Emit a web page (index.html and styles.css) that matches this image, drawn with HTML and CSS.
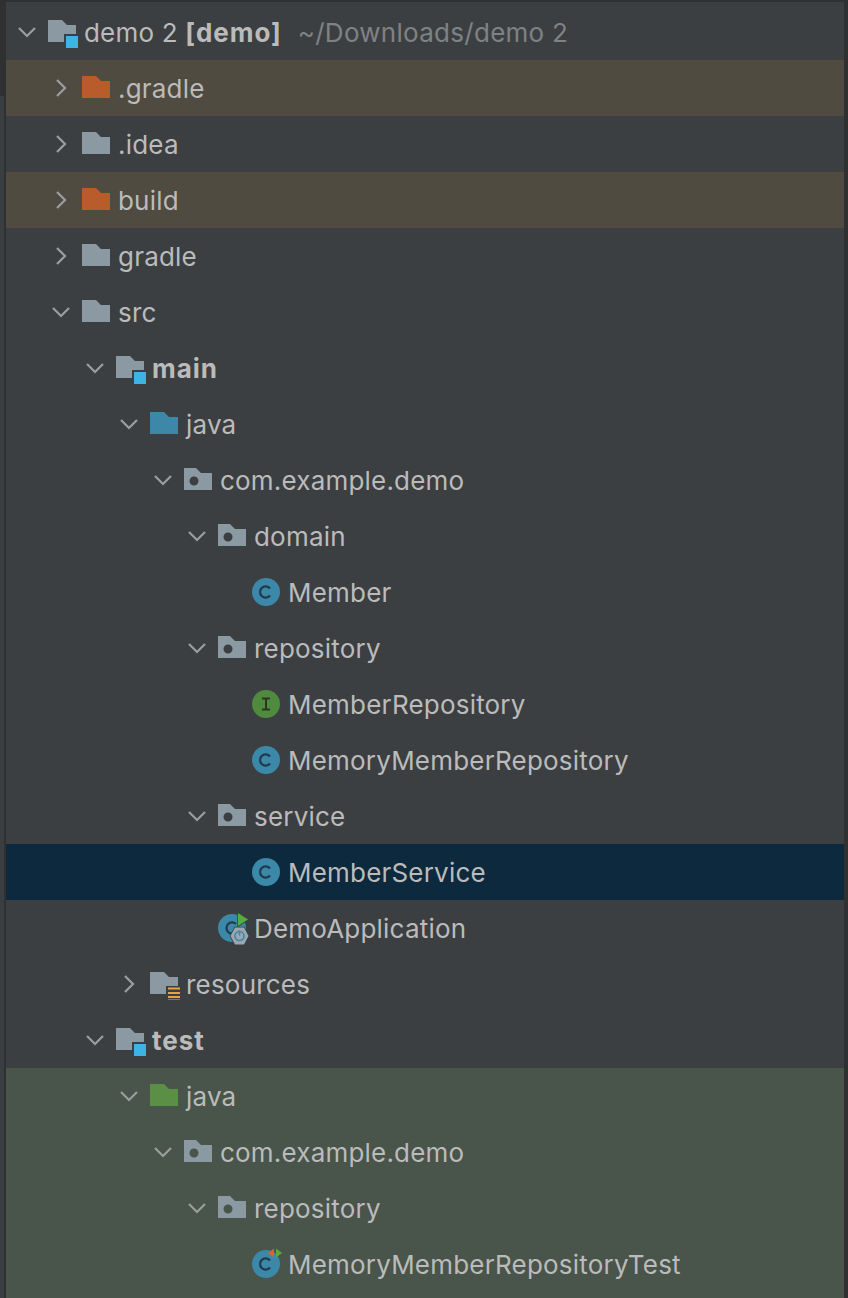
FILE: index.html
```html
<!DOCTYPE html>
<html lang="en">
<head>
<meta charset="utf-8">
<title>Project tree</title>
<link rel="stylesheet" href="styles.css">
</head>
<body>
<svg class="defs" aria-hidden="true">
  <symbol id="open" viewBox="0 0 22 22"><path d="M3 7l8 8 8-8" fill="none" stroke="#9b9d9e" stroke-width="2.2"/></symbol>
  <symbol id="closed" viewBox="0 0 22 22"><path d="M7 3l8 8-8 8" fill="none" stroke="#9b9d9e" stroke-width="2.2"/></symbol>
  <symbol id="folder" viewBox="0 0 32 32"><path d="M0 4H14L19 9H28V26H0Z"/></symbol>
  <symbol id="module" viewBox="0 0 32 32"><path class="grey" d="M0 4H14L19 9H28V18H16V26H0Z"/><rect class="blue" x="18" y="20" width="12" height="12"/></symbol>
  <symbol id="package" viewBox="0 0 32 32"><path class="grey" fill-rule="evenodd" d="M0 4H12L17 9H28V26H0ZM10 12.500a4.500 4.500 0 1 0 0 9 4.500 4.500 0 1 0 0-9Z"/></symbol>
  <symbol id="resroot" viewBox="0 0 32 32"><path class="grey" d="M0 4H14L19 9H28V18H16V26H0Z"/><path class="lines" d="M18 20.500h12M18 25h12M18 29h12M18 32.500h12"/></symbol>
  <symbol id="cls" viewBox="0 0 32 32"><circle class="teal" cx="14" cy="16" r="14"/><path class="ink" d="M18 12.500a5.600 5.600 0 1 0 0 7"/></symbol>
  <symbol id="ifc" viewBox="0 0 32 32"><circle class="green" cx="14" cy="16" r="14"/><path class="ink2" d="M10 10.500h8M10 21.500h8M14 10.500v11"/></symbol>
  <symbol id="runcls" viewBox="0 0 36 36"><circle class="teal" cx="14" cy="18" r="14"/><path class="ink" d="M18 14a5.600 5.600 0 1 0 0 8"/><path class="run gap" d="M20 3l10 6.500-10 6.500Z"/><path class="hex gap" d="M17 17.500h9l4.500 8.500-4.500 8.500h-9l-4.500-8.500Z"/><circle class="pwr" cx="21.500" cy="26" r="4.500"/><path class="pwr" d="M21.500 20.500v5"/></symbol>
  <symbol id="testcls" viewBox="0 0 32 32"><circle class="teal" cx="14" cy="16" r="14"/><path class="ink" d="M18 12.500a5.600 5.600 0 1 0 0 7"/><path class="orange" d="M22 0.500v9l-6-4.500Z"/><path class="run" d="M24 0.500l6 4.500-6 4.500Z"/></symbol>
</svg>

<div class="window">
  <div class="edge-left"><div class="edge-top"></div><div class="edge-rest"></div></div>
  <main class="tree">
    <div class="row d0"><svg class="arrow"><use href="#open"/></svg><svg class="icon"><use href="#module"/></svg><span>demo 2 <b>[demo]</b></span><span class="path">~/Downloads/demo 2</span></div>
    <div class="row d1 excluded"><svg class="arrow"><use href="#closed"/></svg><svg class="icon f-orange"><use href="#folder"/></svg><span>.gradle</span></div>
    <div class="row d1"><svg class="arrow"><use href="#closed"/></svg><svg class="icon f-grey"><use href="#folder"/></svg><span>.idea</span></div>
    <div class="row d1 excluded"><svg class="arrow"><use href="#closed"/></svg><svg class="icon f-orange"><use href="#folder"/></svg><span>build</span></div>
    <div class="row d1"><svg class="arrow"><use href="#closed"/></svg><svg class="icon f-grey"><use href="#folder"/></svg><span>gradle</span></div>
    <div class="row d1"><svg class="arrow"><use href="#open"/></svg><svg class="icon f-grey"><use href="#folder"/></svg><span>src</span></div>
    <div class="row d2"><svg class="arrow"><use href="#open"/></svg><svg class="icon"><use href="#module"/></svg><b>main</b></div>
    <div class="row d3"><svg class="arrow"><use href="#open"/></svg><svg class="icon f-blue"><use href="#folder"/></svg><span>java</span></div>
    <div class="row d4"><svg class="arrow"><use href="#open"/></svg><svg class="icon"><use href="#package"/></svg><span>com.example.demo</span></div>
    <div class="row d5"><svg class="arrow"><use href="#open"/></svg><svg class="icon"><use href="#package"/></svg><span>domain</span></div>
    <div class="row d6"><i class="slot"></i><svg class="icon"><use href="#cls"/></svg><span>Member</span></div>
    <div class="row d5"><svg class="arrow"><use href="#open"/></svg><svg class="icon"><use href="#package"/></svg><span>repository</span></div>
    <div class="row d6"><i class="slot"></i><svg class="icon"><use href="#ifc"/></svg><span>MemberRepository</span></div>
    <div class="row d6"><i class="slot"></i><svg class="icon"><use href="#cls"/></svg><span>MemoryMemberRepository</span></div>
    <div class="row d5"><svg class="arrow"><use href="#open"/></svg><svg class="icon"><use href="#package"/></svg><span>service</span></div>
    <div class="row d6 selected"><i class="slot"></i><svg class="icon"><use href="#cls"/></svg><span>MemberService</span></div>
    <div class="row d5"><i class="slot"></i><svg class="icon run-icon"><use href="#runcls"/></svg><span>DemoApplication</span></div>
    <div class="row d3"><svg class="arrow"><use href="#closed"/></svg><svg class="icon"><use href="#resroot"/></svg><span>resources</span></div>
    <div class="row d2"><svg class="arrow"><use href="#open"/></svg><svg class="icon"><use href="#module"/></svg><b>test</b></div>
    <section class="test-root">
      <div class="row d3"><svg class="arrow"><use href="#open"/></svg><svg class="icon f-green"><use href="#folder"/></svg><span>java</span></div>
      <div class="row d4"><svg class="arrow"><use href="#open"/></svg><svg class="icon"><use href="#package"/></svg><span>com.example.demo</span></div>
      <div class="row d5"><svg class="arrow"><use href="#open"/></svg><svg class="icon"><use href="#package"/></svg><span>repository</span></div>
      <div class="row d6"><i class="slot"></i><svg class="icon"><use href="#testcls"/></svg><span>MemoryMemberRepositoryTest</span></div>
    </section>
  </main>
  <div class="edge-right"></div>
</div>
</body>
</html>
```

FILE: styles.css
```css
html, body {
  margin: 0;
  height: 1298px;
  overflow: hidden;
  background: #2f3032;
}
.defs { display: none; }
.window {
  display: flex;
  height: 1298px;
  overflow: hidden;
  font-family: Inter, "Liberation Sans", sans-serif;
  font-size: 26px;
  letter-spacing: 0.2px;
  color: #bbbbbb;
}
.edge-left {
  width: 6px;
  flex: none;
  display: flex;
  flex-direction: column;
}
.edge-top { height: 96px; }
.edge-rest {
  flex: 1;
  width: 4px;
  background: #3b3e41;
}
.edge-right {
  width: 4px;
  flex: none;
}
.tree {
  flex: 1;
  min-width: 0;
  padding-top: 4px;
  background: #3c3f41;
  box-shadow: inset 0 2px 0 #2f3032;
}
.row {
  display: flex;
  align-items: center;
  height: 56px;
  white-space: nowrap;
}
.row b {
  font-weight: 700;
  letter-spacing: 0.95px;
}
.d0 { padding-left: 10px; }
.d1 { padding-left: 44px; }
.d2 { padding-left: 78px; }
.d3 { padding-left: 112px; }
.d4 { padding-left: 146px; }
.d5 { padding-left: 180px; }
.d6 { padding-left: 214px; }
.excluded { background: #4f4b41; }
.selected { background: #0d293e; }
.test-root {
  background: #49544a;
  padding-bottom: 6px;
}
.arrow {
  width: 22px;
  height: 22px;
  margin-right: 10px;
  flex: none;
}
.slot {
  width: 32px;
  flex: none;
}
.icon {
  width: 32px;
  height: 32px;
  margin-right: 4px;
  flex: none;
  overflow: visible;
}
.run-icon {
  width: 36px;
  height: 36px;
  margin-right: 0;
}
.path {
  margin-left: 16px;
  letter-spacing: 0.28px;
  color: #7f8284;
}
.f-orange { fill: #b85c2c; }
.f-grey { fill: #8b99a2; }
.f-blue { fill: #3d87a8; }
.f-green { fill: #5a8f45; }
.grey { fill: #8b99a2; }
.blue { fill: #3db4e4; }
.lines { fill: none; stroke: #e3a33f; stroke-width: 2; }
.teal { fill: #3c88a8; }
.green { fill: #4f8a3f; }
.ink { fill: none; stroke: #1f3b4d; stroke-width: 2.2; }
.ink2 { fill: none; stroke: #26381f; stroke-width: 2; }
.run { fill: #54ae3e; }
.orange { fill: #e0622a; }
.hex { fill: #9aa7b0; }
.gap { stroke: #3c3f41; stroke-width: 1.500; paint-order: stroke; }
.pwr { fill: none; stroke: #3d87a8; stroke-width: 1.600; }
```
